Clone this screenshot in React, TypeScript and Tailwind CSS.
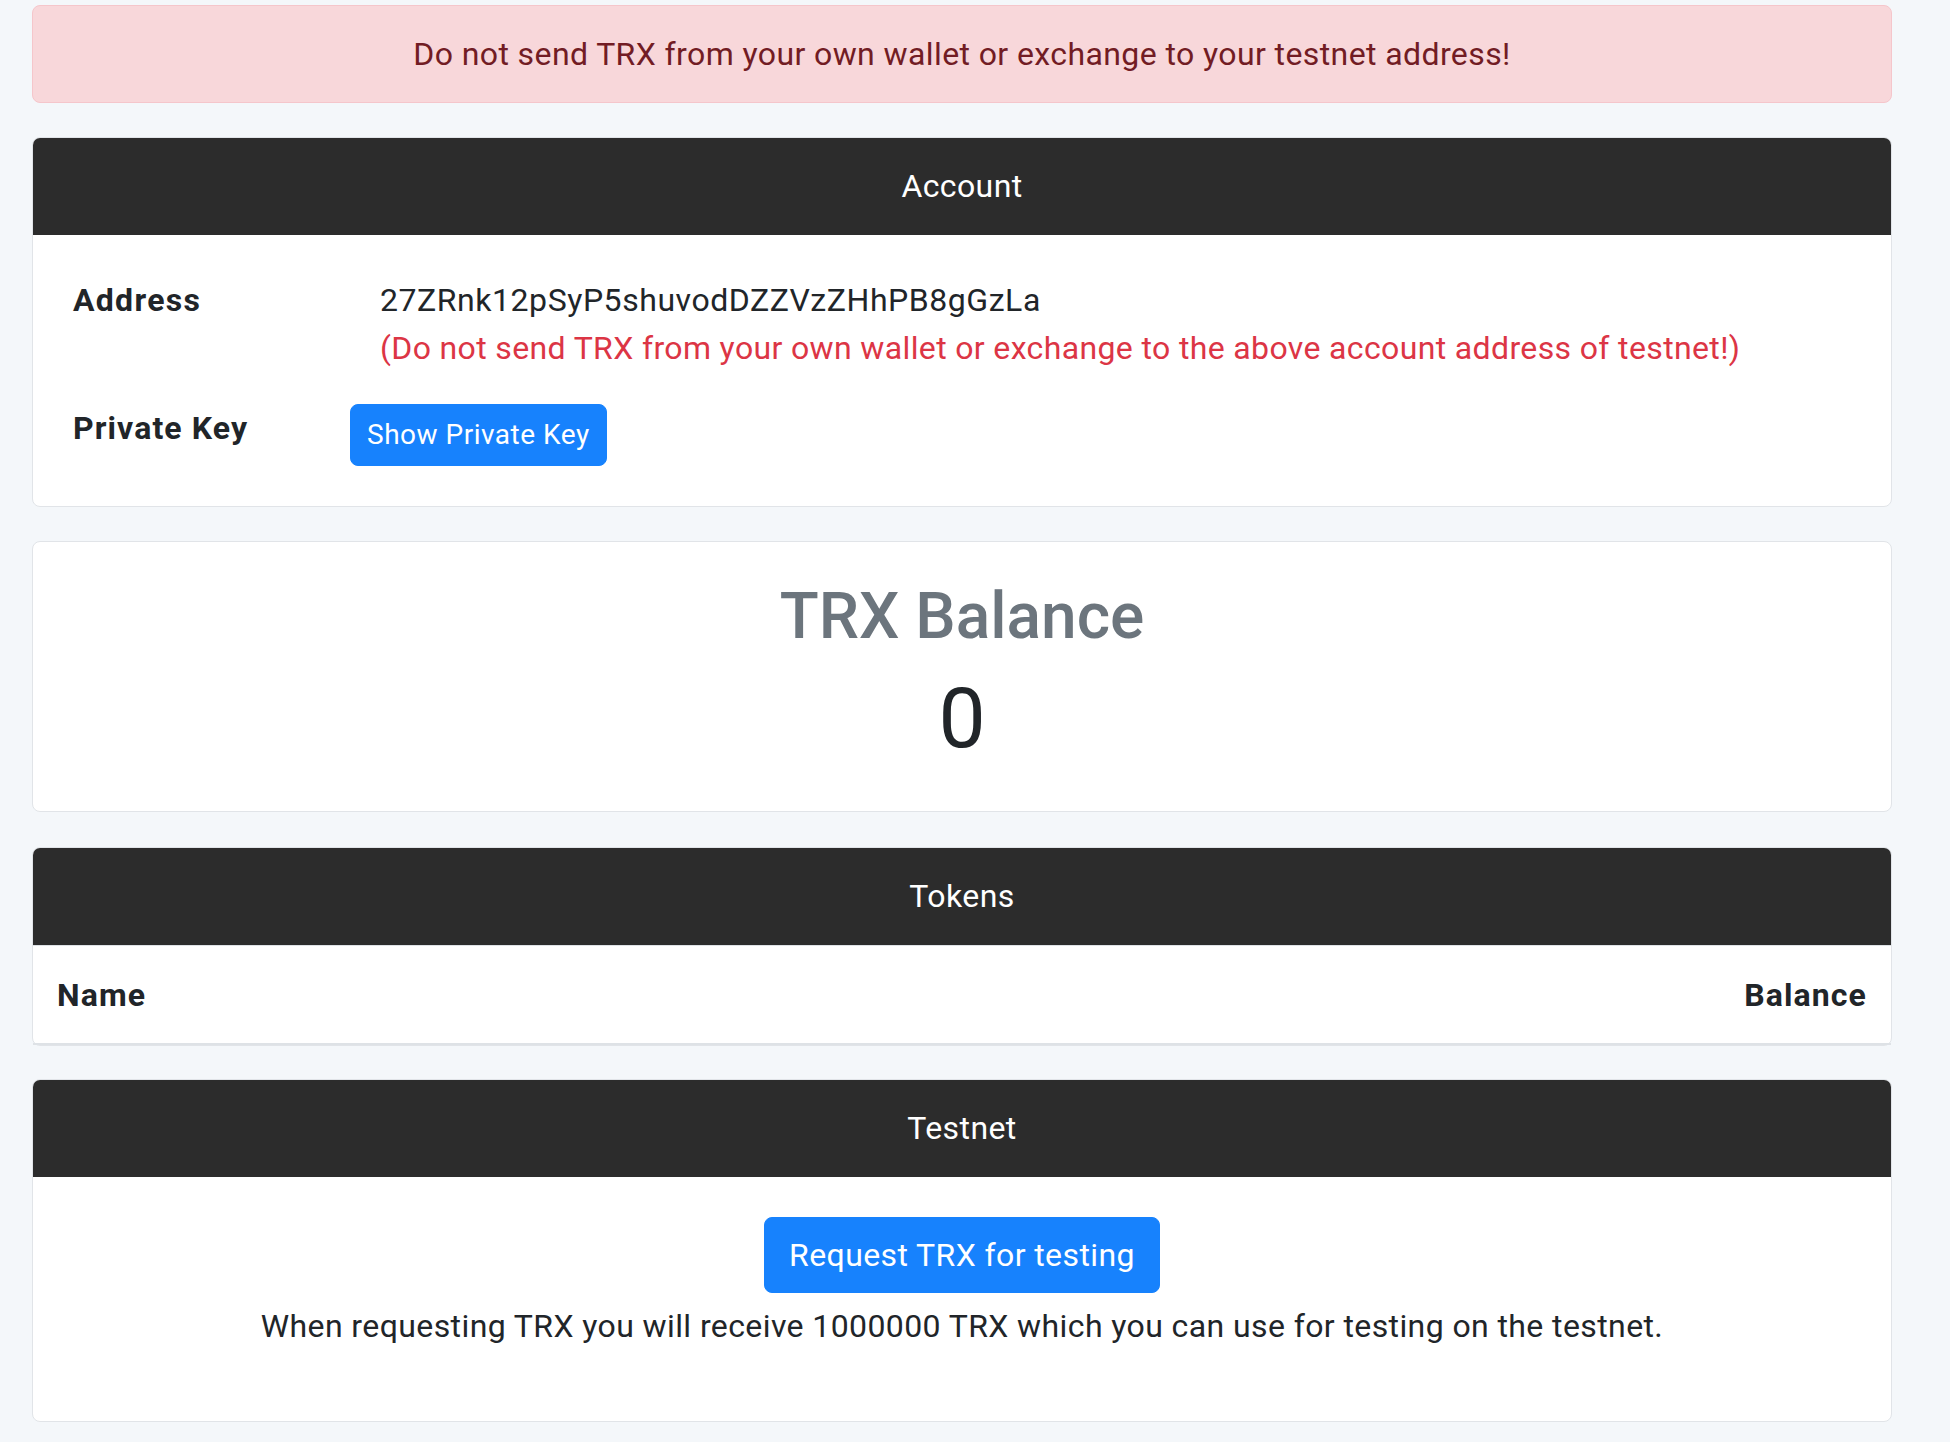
const font = { fontFamily: "Roboto, 'Liberation Sans', sans-serif" };

function CardHeader({ title }: { title: string }) {
  return (
    <div className="rounded-t-[7px] bg-[#2c2c2c] px-10 pt-6 pb-[25px] text-center text-[32px] leading-[48px] text-white">
      {title}
    </div>
  );
}

export default function App() {
  return (
    <div style={font} className="min-h-[1442px] bg-[#f4f7fa] pl-8 pr-[58px] pt-[5px] text-[32px] leading-[48px] tracking-[0.4px] text-[#212529]">
      <div className="mb-[34px] rounded-lg border border-[#f5c6cb] bg-[#f8d7da] px-10 py-6 text-center text-[#721c24]">
        Do not send TRX from your own wallet or exchange to your testnet address!
      </div>

      <div className="mb-[34px] rounded-lg border border-[#e1e4e8] bg-white">
        <CardHeader title="Account" />
        <div className="px-10 pt-[41px] pb-10">
          <div className="grid grid-cols-[277px_1fr] gap-y-8">
            <div className="font-bold tracking-[1.3px]">Address</div>
            <div className="pl-[30px]">
              <div className="tracking-[0.55px]">27ZRnk12pSyP5shuvodDZZVzZHhPB8gGzLa</div>
              <div className="tracking-[0.36px] text-[#dc3545]">
                (Do not send TRX from your own wallet or exchange to the above account address of testnet!)
              </div>
            </div>
            <div className="font-bold tracking-[1.1px]">Private Key</div>
            <div>
              <button className="rounded-lg border border-[#1782fd] bg-[#1782fd] px-4 py-[9px] text-[28px] leading-[42px] tracking-[0.5px] text-white">
                Show Private Key
              </button>
            </div>
          </div>
        </div>
      </div>

      <div className="mb-[35px] rounded-lg border border-[#e1e4e8] bg-white px-10 pt-9 pb-11 text-center">
        <h2 className="mb-4 text-[64px] font-medium leading-[77px] tracking-normal text-[#6c757d]">TRX Balance</h2>
        <h1 className="text-[84px] font-normal leading-[96px] tracking-normal">0</h1>
      </div>

      <div className="mb-[33px] rounded-lg border border-[#e1e4e8] bg-white">
        <CardHeader title="Tokens" />
        <table className="w-full">
          <thead>
            <tr className="border-t border-b-2 border-[#dee2e6]">
              <th className="px-6 pt-[25px] pb-6 text-left font-bold tracking-[1.1px]">Name</th>
              <th className="px-6 pt-[25px] pb-6 text-right font-bold tracking-[1.1px]">Balance</th>
            </tr>
          </thead>
        </table>
      </div>

      <div className="rounded-lg border border-[#e1e4e8] bg-white">
        <CardHeader title="Testnet" />
        <div className="px-10 pt-10 pb-[39px] text-center">
          <button className="mb-[9px] rounded-lg border border-[#1782fd] bg-[#1782fd] px-6 py-[13px] text-[32px] leading-[48px] text-white">
            Request TRX for testing
          </button>
          <p className="mb-8">When requesting TRX you will receive 1000000 TRX which you can use for testing on the testnet.</p>
        </div>
      </div>
    </div>
  );
}
